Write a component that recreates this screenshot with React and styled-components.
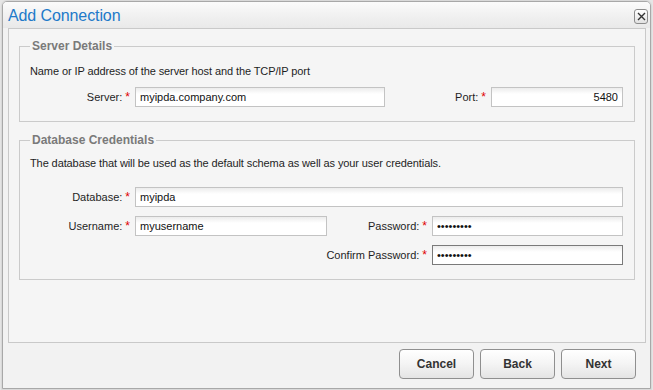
import React from "react";
import styled, { createGlobalStyle } from "styled-components";

const Global = createGlobalStyle`
  html, body { margin: 0; padding: 0; background: #e6e6e6; }
  body { font-family: "Liberation Sans", Arial, sans-serif; }
  * { box-sizing: border-box; }
`;

const Dialog = styled.div`
  margin: 1px 2px 1px 2px;
  height: 388px;
  display: flex;
  flex-direction: column;
  background: #f2f2f2;
  border: 1px solid #a8a8a8;
  border-radius: 5px 5px 0 0;
  box-shadow: 0 0 1px 1px #d8d8d8;
`;

const TitleBar = styled.div`
  height: 26px;
  display: flex;
  align-items: center;
  justify-content: space-between;
  padding: 0 2px 0 5px;
  background: linear-gradient(#fbfbfb, #f1f1f1 50%, #e9e9e9);
  border-radius: 4px 4px 0 0;
`;

const Title = styled.div`
  font-size: 16px;
  color: #2179c9;
  letter-spacing: -0.1px;
  padding-top: 2px;
`;

const CloseButton = styled.button`
  width: 14px;
  height: 15px;
  padding: 0;
  margin-top: 2px;
  display: flex;
  align-items: center;
  justify-content: center;
  border: 1px solid #8c8c8c;
  border-radius: 3px;
  background: linear-gradient(#ffffff, #e2e2e2);
`;

const Panel = styled.div`
  flex: 1;
  margin: 0 4px 0 5px;
  background: #f5f5f5;
  border: 1px solid #c9c9c9;
  padding-top: 10px;
`;

const Fieldset = styled.fieldset`
  margin: ${(p) => p.$top || 0}px 10px 0 10px;
  padding: 0 11px ${(p) => p.$bottom}px 10px;
  border: 1px solid #cbcbcb;
  min-width: 0;
`;

const Legend = styled.legend`
  padding: 0 2px;
  font-size: 12px;
  line-height: 14px;
  font-weight: bold;
  color: #7a7a7a;
`;

const Description = styled.div`
  font-size: 11px;
  line-height: 14px;
  color: #1e1e1e;
  letter-spacing: -0.1px;
  margin: ${(p) => p.$mt}px 0 ${(p) => p.$mb}px 0;
`;

const Rows = styled.div`
  display: flex;
  flex-direction: column;
  gap: 9px;
`;

const Row = styled.div`
  display: flex;
  align-items: center;
  height: 20px;
`;

const Label = styled.label`
  width: ${(p) => p.$w}px;
  flex: none;
  text-align: right;
  padding-right: 5px;
  font-size: 11px;
  color: #1e1e1e;
  white-space: nowrap;
`;

const Req = styled.span`
  color: #e00000;
  font-size: 12px;
  margin-left: 3px;
`;

const Input = styled.input`
  height: 20px;
  width: ${(p) => (p.$w ? `${p.$w}px` : "auto")};
  flex: ${(p) => (p.$w ? "none" : "1")};
  min-width: 0;
  margin: 0;
  padding: 0 4px;
  font-family: "Liberation Sans", Arial, sans-serif;
  font-size: 11px;
  color: #111;
  text-align: ${(p) => (p.$right ? "right" : "left")};
  border: 1px solid ${(p) => (p.$focus ? "#7a7a7a" : "#c3c3c3")};
  background: linear-gradient(#ececec, #ffffff 6px);
  outline: none;
`;

const Footer = styled.div`
  height: 45px;
  display: flex;
  justify-content: flex-end;
  align-items: flex-start;
  gap: 6px;
  padding: 6px 14px 0 0;
`;

const Button = styled.button`
  width: 75px;
  height: 30px;
  border: 1px solid #8f8f8f;
  border-radius: 4px;
  background: linear-gradient(#ffffff, #f4f4f4 50%, #e4e4e4);
  font-family: "Liberation Sans", Arial, sans-serif;
  font-size: 12px;
  font-weight: bold;
  color: #333;
  padding: 0;
`;

export default function App() {
  return (
    <>
      <Global />
      <Dialog>
        <TitleBar>
          <Title>Add Connection</Title>
          <CloseButton aria-label="close">
            <svg width="9" height="9" viewBox="0 0 9 9">
              <path d="M1 1 L8 8 M8 1 L1 8" stroke="#333" strokeWidth="1.4" />
            </svg>
          </CloseButton>
        </TitleBar>
        <Panel>
          <Fieldset $bottom={14}>
            <Legend>Server Details</Legend>
            <Description $mt={11} $mb={9}>
              Name or IP address of the server host and the TCP/IP port
            </Description>
            <Row>
              <Label $w={105}>
                Server:<Req>*</Req>
              </Label>
              <Input $w={250} defaultValue="myipda.company.com" />
              <Label $w={106}>
                Port:<Req>*</Req>
              </Label>
              <Input $right defaultValue="5480" />
            </Row>
          </Fieldset>
          <Fieldset $top={11} $bottom={14}>
            <Legend>Database Credentials</Legend>
            <Description $mt={9} $mb={17}>
              The database that will be used as the default schema as well as your user credentials.
            </Description>
            <Rows>
              <Row>
                <Label $w={105}>
                  Database:<Req>*</Req>
                </Label>
                <Input defaultValue="myipda" />
              </Row>
              <Row>
                <Label $w={105}>
                  Username:<Req>*</Req>
                </Label>
                <Input $w={192} defaultValue="myusername" />
                <Label $w={105}>
                  Password:<Req>*</Req>
                </Label>
                <Input type="password" defaultValue="password1" />
              </Row>
              <Row>
                <Label $w={402}>
                  Confirm Password:<Req>*</Req>
                </Label>
                <Input $focus type="password" defaultValue="password1" />
              </Row>
            </Rows>
          </Fieldset>
        </Panel>
        <Footer>
          <Button>Cancel</Button>
          <Button>Back</Button>
          <Button>Next</Button>
        </Footer>
      </Dialog>
    </>
  );
}
